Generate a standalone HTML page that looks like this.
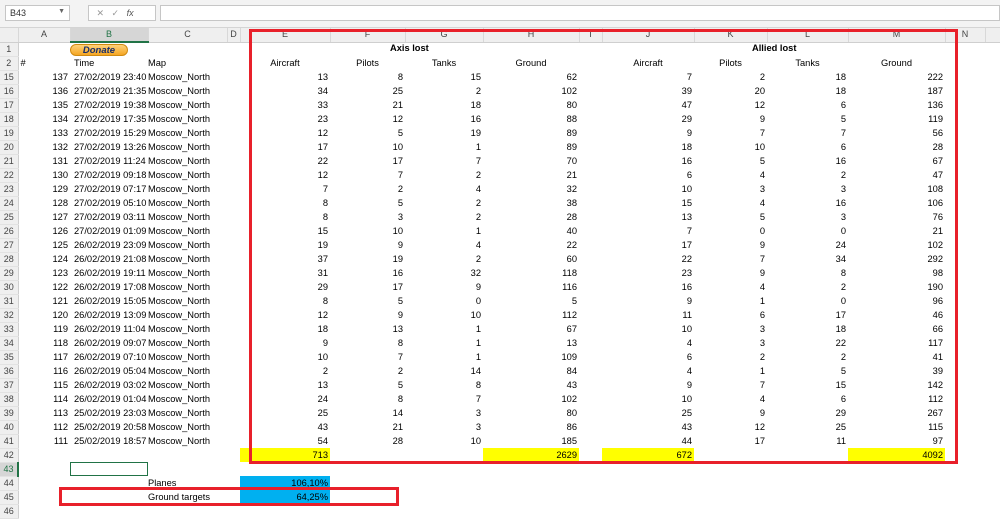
<!DOCTYPE html>
<html><head><meta charset="utf-8"><style>
*{margin:0;padding:0;box-sizing:border-box}
body{width:1000px;height:509px;overflow:hidden;background:#fff;font-family:"Liberation Sans",Arial,sans-serif;font-size:9.3px;color:#000;position:relative}
#top{position:absolute;left:0;top:0;width:1000px;height:28px;background:#f3f3f3;border-bottom:1px solid #d4d4d4}
.nb{position:absolute;left:5px;top:5px;width:65px;height:16px;background:#fff;border:1px solid #c6c6c6;font-size:9px;padding:2px 4px;color:#333}
.fx{position:absolute;left:88px;top:5px;width:68px;height:16px;background:#fff;border:1px solid #c6c6c6;color:#999;font-size:9px;padding-top:2px}
.fb{position:absolute;left:160px;top:5px;width:840px;height:16px;background:#fff;border:1px solid #c6c6c6}
table{position:absolute;left:0;top:28px;border-collapse:collapse;table-layout:fixed;width:1000px}
td{height:13.92px;padding:0 2px;white-space:nowrap;overflow:hidden;line-height:13px}
tr.h td{height:13px;background:#efefef;text-align:center;color:#444;font-size:9px;border-right:1px solid #d8d8d8;border-bottom:1px solid #cfcfcf}
td.rh{background:#efefef;color:#444;font-size:9px;text-align:center;border-right:1px solid #cfcfcf;border-bottom:1px solid #e2e2e2;padding:0}
td.t{padding-left:4px}
td.m{padding-left:0;overflow:visible}
.r{text-align:right}
.c{text-align:center}
.y{background:#ffff00}
.b{background:#00b0f0}
.red{position:absolute;border:3px solid #e8202a}
</style></head><body>
<div id="top"><div class="nb">B43 <span style="float:right;font-size:7px;color:#666">▼</span></div><div class="fx">&nbsp;&nbsp;&nbsp;✕&nbsp;&nbsp;&nbsp;✓&nbsp;&nbsp;&nbsp;<i style="color:#555">fx</i></div><div class="fb"></div></div>
<table>
<colgroup><col style="width:18px"><col style="width:52px"><col style="width:78px"><col style="width:79px"><col style="width:13px"><col style="width:90px"><col style="width:75px"><col style="width:78px"><col style="width:96px"><col style="width:23px"><col style="width:92px"><col style="width:73px"><col style="width:81px"><col style="width:97px"><col style="width:40px"><col style="width:15px"></colgroup>
<tr class="h"><td></td><td>A</td><td style="background:#d6d6d6;border-bottom:2px solid #217346;color:#217346">B</td><td>C</td><td>D</td><td>E</td><td>F</td><td>G</td><td>H</td><td>I</td><td>J</td><td>K</td><td>L</td><td>M</td><td>N</td><td></td></tr>
<tr><td class="rh">1</td><td></td><td style="padding:0"><div style="width:58px;height:12px;border-radius:7px;background:linear-gradient(#ffd27a,#f5a623);border:1px solid #d08a10;color:#1a2f6a;font-weight:bold;font-style:italic;text-align:center;font-size:9.5px;line-height:11px">Donate</div></td><td></td><td></td><td></td><td></td><td></td><td></td><td></td><td></td><td></td><td></td><td></td><td></td><td></td></tr>
<tr><td class="rh">2</td><td>#</td><td class="t">Time</td><td class="m">Map</td><td></td><td class="c">Aircraft</td><td class="c">Pilots</td><td class="c">Tanks</td><td class="c">Ground</td><td></td><td class="c">Aircraft</td><td class="c">Pilots</td><td class="c">Tanks</td><td class="c">Ground</td><td></td><td></td></tr>
<tr><td class="rh">15</td><td class="r">137</td><td class="t">27/02/2019 23:40</td><td class="m">Moscow_North</td><td></td><td class="r">13</td><td class="r">8</td><td class="r">15</td><td class="r">62</td><td></td><td class="r">7</td><td class="r">2</td><td class="r">18</td><td class="r">222</td><td></td><td></td></tr>
<tr><td class="rh">16</td><td class="r">136</td><td class="t">27/02/2019 21:35</td><td class="m">Moscow_North</td><td></td><td class="r">34</td><td class="r">25</td><td class="r">2</td><td class="r">102</td><td></td><td class="r">39</td><td class="r">20</td><td class="r">18</td><td class="r">187</td><td></td><td></td></tr>
<tr><td class="rh">17</td><td class="r">135</td><td class="t">27/02/2019 19:38</td><td class="m">Moscow_North</td><td></td><td class="r">33</td><td class="r">21</td><td class="r">18</td><td class="r">80</td><td></td><td class="r">47</td><td class="r">12</td><td class="r">6</td><td class="r">136</td><td></td><td></td></tr>
<tr><td class="rh">18</td><td class="r">134</td><td class="t">27/02/2019 17:35</td><td class="m">Moscow_North</td><td></td><td class="r">23</td><td class="r">12</td><td class="r">16</td><td class="r">88</td><td></td><td class="r">29</td><td class="r">9</td><td class="r">5</td><td class="r">119</td><td></td><td></td></tr>
<tr><td class="rh">19</td><td class="r">133</td><td class="t">27/02/2019 15:29</td><td class="m">Moscow_North</td><td></td><td class="r">12</td><td class="r">5</td><td class="r">19</td><td class="r">89</td><td></td><td class="r">9</td><td class="r">7</td><td class="r">7</td><td class="r">56</td><td></td><td></td></tr>
<tr><td class="rh">20</td><td class="r">132</td><td class="t">27/02/2019 13:26</td><td class="m">Moscow_North</td><td></td><td class="r">17</td><td class="r">10</td><td class="r">1</td><td class="r">89</td><td></td><td class="r">18</td><td class="r">10</td><td class="r">6</td><td class="r">28</td><td></td><td></td></tr>
<tr><td class="rh">21</td><td class="r">131</td><td class="t">27/02/2019 11:24</td><td class="m">Moscow_North</td><td></td><td class="r">22</td><td class="r">17</td><td class="r">7</td><td class="r">70</td><td></td><td class="r">16</td><td class="r">5</td><td class="r">16</td><td class="r">67</td><td></td><td></td></tr>
<tr><td class="rh">22</td><td class="r">130</td><td class="t">27/02/2019 09:18</td><td class="m">Moscow_North</td><td></td><td class="r">12</td><td class="r">7</td><td class="r">2</td><td class="r">21</td><td></td><td class="r">6</td><td class="r">4</td><td class="r">2</td><td class="r">47</td><td></td><td></td></tr>
<tr><td class="rh">23</td><td class="r">129</td><td class="t">27/02/2019 07:17</td><td class="m">Moscow_North</td><td></td><td class="r">7</td><td class="r">2</td><td class="r">4</td><td class="r">32</td><td></td><td class="r">10</td><td class="r">3</td><td class="r">3</td><td class="r">108</td><td></td><td></td></tr>
<tr><td class="rh">24</td><td class="r">128</td><td class="t">27/02/2019 05:10</td><td class="m">Moscow_North</td><td></td><td class="r">8</td><td class="r">5</td><td class="r">2</td><td class="r">38</td><td></td><td class="r">15</td><td class="r">4</td><td class="r">16</td><td class="r">106</td><td></td><td></td></tr>
<tr><td class="rh">25</td><td class="r">127</td><td class="t">27/02/2019 03:11</td><td class="m">Moscow_North</td><td></td><td class="r">8</td><td class="r">3</td><td class="r">2</td><td class="r">28</td><td></td><td class="r">13</td><td class="r">5</td><td class="r">3</td><td class="r">76</td><td></td><td></td></tr>
<tr><td class="rh">26</td><td class="r">126</td><td class="t">27/02/2019 01:09</td><td class="m">Moscow_North</td><td></td><td class="r">15</td><td class="r">10</td><td class="r">1</td><td class="r">40</td><td></td><td class="r">7</td><td class="r">0</td><td class="r">0</td><td class="r">21</td><td></td><td></td></tr>
<tr><td class="rh">27</td><td class="r">125</td><td class="t">26/02/2019 23:09</td><td class="m">Moscow_North</td><td></td><td class="r">19</td><td class="r">9</td><td class="r">4</td><td class="r">22</td><td></td><td class="r">17</td><td class="r">9</td><td class="r">24</td><td class="r">102</td><td></td><td></td></tr>
<tr><td class="rh">28</td><td class="r">124</td><td class="t">26/02/2019 21:08</td><td class="m">Moscow_North</td><td></td><td class="r">37</td><td class="r">19</td><td class="r">2</td><td class="r">60</td><td></td><td class="r">22</td><td class="r">7</td><td class="r">34</td><td class="r">292</td><td></td><td></td></tr>
<tr><td class="rh">29</td><td class="r">123</td><td class="t">26/02/2019 19:11</td><td class="m">Moscow_North</td><td></td><td class="r">31</td><td class="r">16</td><td class="r">32</td><td class="r">118</td><td></td><td class="r">23</td><td class="r">9</td><td class="r">8</td><td class="r">98</td><td></td><td></td></tr>
<tr><td class="rh">30</td><td class="r">122</td><td class="t">26/02/2019 17:08</td><td class="m">Moscow_North</td><td></td><td class="r">29</td><td class="r">17</td><td class="r">9</td><td class="r">116</td><td></td><td class="r">16</td><td class="r">4</td><td class="r">2</td><td class="r">190</td><td></td><td></td></tr>
<tr><td class="rh">31</td><td class="r">121</td><td class="t">26/02/2019 15:05</td><td class="m">Moscow_North</td><td></td><td class="r">8</td><td class="r">5</td><td class="r">0</td><td class="r">5</td><td></td><td class="r">9</td><td class="r">1</td><td class="r">0</td><td class="r">96</td><td></td><td></td></tr>
<tr><td class="rh">32</td><td class="r">120</td><td class="t">26/02/2019 13:09</td><td class="m">Moscow_North</td><td></td><td class="r">12</td><td class="r">9</td><td class="r">10</td><td class="r">112</td><td></td><td class="r">11</td><td class="r">6</td><td class="r">17</td><td class="r">46</td><td></td><td></td></tr>
<tr><td class="rh">33</td><td class="r">119</td><td class="t">26/02/2019 11:04</td><td class="m">Moscow_North</td><td></td><td class="r">18</td><td class="r">13</td><td class="r">1</td><td class="r">67</td><td></td><td class="r">10</td><td class="r">3</td><td class="r">18</td><td class="r">66</td><td></td><td></td></tr>
<tr><td class="rh">34</td><td class="r">118</td><td class="t">26/02/2019 09:07</td><td class="m">Moscow_North</td><td></td><td class="r">9</td><td class="r">8</td><td class="r">1</td><td class="r">13</td><td></td><td class="r">4</td><td class="r">3</td><td class="r">22</td><td class="r">117</td><td></td><td></td></tr>
<tr><td class="rh">35</td><td class="r">117</td><td class="t">26/02/2019 07:10</td><td class="m">Moscow_North</td><td></td><td class="r">10</td><td class="r">7</td><td class="r">1</td><td class="r">109</td><td></td><td class="r">6</td><td class="r">2</td><td class="r">2</td><td class="r">41</td><td></td><td></td></tr>
<tr><td class="rh">36</td><td class="r">116</td><td class="t">26/02/2019 05:04</td><td class="m">Moscow_North</td><td></td><td class="r">2</td><td class="r">2</td><td class="r">14</td><td class="r">84</td><td></td><td class="r">4</td><td class="r">1</td><td class="r">5</td><td class="r">39</td><td></td><td></td></tr>
<tr><td class="rh">37</td><td class="r">115</td><td class="t">26/02/2019 03:02</td><td class="m">Moscow_North</td><td></td><td class="r">13</td><td class="r">5</td><td class="r">8</td><td class="r">43</td><td></td><td class="r">9</td><td class="r">7</td><td class="r">15</td><td class="r">142</td><td></td><td></td></tr>
<tr><td class="rh">38</td><td class="r">114</td><td class="t">26/02/2019 01:04</td><td class="m">Moscow_North</td><td></td><td class="r">24</td><td class="r">8</td><td class="r">7</td><td class="r">102</td><td></td><td class="r">10</td><td class="r">4</td><td class="r">6</td><td class="r">112</td><td></td><td></td></tr>
<tr><td class="rh">39</td><td class="r">113</td><td class="t">25/02/2019 23:03</td><td class="m">Moscow_North</td><td></td><td class="r">25</td><td class="r">14</td><td class="r">3</td><td class="r">80</td><td></td><td class="r">25</td><td class="r">9</td><td class="r">29</td><td class="r">267</td><td></td><td></td></tr>
<tr><td class="rh">40</td><td class="r">112</td><td class="t">25/02/2019 20:58</td><td class="m">Moscow_North</td><td></td><td class="r">43</td><td class="r">21</td><td class="r">3</td><td class="r">86</td><td></td><td class="r">43</td><td class="r">12</td><td class="r">25</td><td class="r">115</td><td></td><td></td></tr>
<tr><td class="rh">41</td><td class="r">111</td><td class="t">25/02/2019 18:57</td><td class="m">Moscow_North</td><td></td><td class="r">54</td><td class="r">28</td><td class="r">10</td><td class="r">185</td><td></td><td class="r">44</td><td class="r">17</td><td class="r">11</td><td class="r">97</td><td></td><td></td></tr>
<tr><td class="rh">42</td><td></td><td></td><td></td><td></td><td class="r y">713</td><td></td><td></td><td class="r y">2629</td><td></td><td class="r y">672</td><td></td><td></td><td class="r y">4092</td><td></td><td></td></tr>
<tr><td class="rh" style="background:#d6d6d6;color:#217346;border-right:2px solid #217346">43</td><td></td><td style="outline:1px solid #217346;outline-offset:-1px"></td><td></td><td></td><td></td><td></td><td></td><td></td><td></td><td></td><td></td><td></td><td></td><td></td><td></td></tr>
<tr><td class="rh">44</td><td></td><td></td><td class="m">Planes</td><td></td><td class="r b">106,10%</td><td></td><td></td><td></td><td></td><td></td><td></td><td></td><td></td><td></td><td></td></tr>
<tr><td class="rh">45</td><td></td><td></td><td class="m">Ground targets</td><td></td><td class="r b">64,25%</td><td></td><td></td><td></td><td></td><td></td><td></td><td></td><td></td><td></td><td></td></tr>
<tr><td class="rh">46</td><td></td><td></td><td></td><td></td><td></td><td></td><td></td><td></td><td></td><td></td><td></td><td></td><td></td><td></td><td></td></tr>
</table>
<div style="position:absolute;left:390px;top:43px;font-weight:bold">Axis lost</div>
<div style="position:absolute;left:752px;top:43px;font-weight:bold">Allied lost</div>
<div class="red" style="left:249px;top:29px;width:709px;height:435px"></div>
<div class="red" style="left:59px;top:487px;width:340px;height:19px"></div>
</body></html>
